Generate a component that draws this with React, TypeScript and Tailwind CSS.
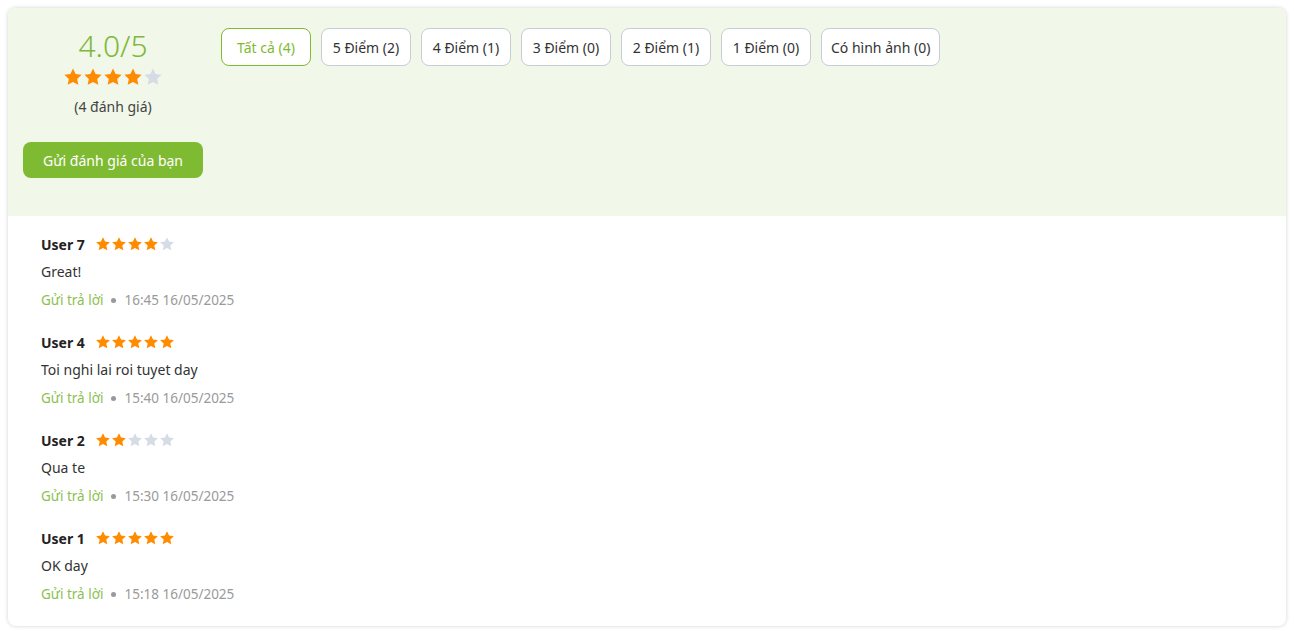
import React from "react";

const Star = ({ filled, size = 18 }: { filled: boolean; size?: number }) => (
  <svg width={size} height={size} viewBox="0 0 24 24">
    <path
      d="M12 1.8l3.1 6.6 7.2.9-5.3 5 1.4 7.1L12 17.9l-6.4 3.5 1.4-7.1-5.3-5 7.2-.9z"
      fill={filled ? "#ff8c00" : "#d6dce5"}
    />
  </svg>
);

const Stars = ({ n, size }: { n: number; size: number }) => (
  <div className="flex">
    {[0, 1, 2, 3, 4].map((i) => (
      <Star key={i} filled={i < n} size={size} />
    ))}
  </div>
);

const filters = [
  "Tất cả (4)",
  "5 Điểm (2)",
  "4 Điểm (1)",
  "3 Điểm (0)",
  "2 Điểm (1)",
  "1 Điểm (0)",
  "Có hình ảnh (0)",
];

const reviews = [
  { user: "User 7", stars: 4, text: "Great!", time: "16:45 16/05/2025" },
  { user: "User 4", stars: 5, text: "Toi nghi lai roi tuyet day", time: "15:40 16/05/2025" },
  { user: "User 2", stars: 2, text: "Qua te", time: "15:30 16/05/2025" },
  { user: "User 1", stars: 5, text: "OK day", time: "15:18 16/05/2025" },
];

export default function App() {
  return (
    <div
      className="min-h-[631px] bg-white p-2"
      style={{ fontFamily: '"Noto Sans", sans-serif' }}
    >
      <div className="rounded-lg bg-white shadow-[0_0_4px_rgba(0,0,0,0.18)] overflow-hidden">
        <div className="flex h-[208px] bg-[#f1f7e9] px-[15px] pt-5">
          <div className="flex w-[180px] flex-col items-center">
            <div className="mt-[3px] text-[30px] leading-[30px] font-light text-[#7fb83a]">4.0/5</div>
            <div className="mt-[6px]">
              <Stars n={4} size={20} />
            </div>
            <div className="mt-[9px] text-[14px] text-[#444]">(4 đánh giá)</div>
            <button className="mt-[25px] h-9 w-[180px] rounded-lg bg-[#7fba33] text-[14px] text-white">
              Gửi đánh giá của bạn
            </button>
          </div>
          <div className="ml-[18px] flex gap-[10px]">
            {filters.map((f, i) => (
              <div
                key={f}
                className={`flex h-[38px] min-w-[90px] items-center justify-center rounded-lg border bg-white px-[9px] text-[14px] ${
                  i === 0 ? "border-[#7fba33] text-[#7fba33]" : "border-[#c8cdd3] text-[#333]"
                }`}
              >
                {f}
              </div>
            ))}
          </div>
        </div>
        <div className="flex flex-col gap-[22px] px-[33px] pt-[18px] pb-[22px]">
          {reviews.map((r) => (
            <div key={r.user} className="flex flex-col">
              <div className="flex h-[20px] items-center gap-[10px]">
                <span className="text-[14px] font-bold text-[#222]">{r.user}</span>
                <Stars n={r.stars} size={16} />
              </div>
              <div className="mt-[8px] h-[20px] text-[14px] leading-[20px] text-[#333]">{r.text}</div>
              <div className="mt-[8px] flex h-[20px] items-center text-[13.5px] leading-[20px]">
                <span className="text-[#8cc152]">Gửi trả lời</span>
                <span className="mx-[8px] h-[5px] w-[5px] rounded-full bg-[#999]" />
                <span className="text-[#9a9a9a]">{r.time}</span>
              </div>
            </div>
          ))}
        </div>
      </div>
    </div>
  );
}
